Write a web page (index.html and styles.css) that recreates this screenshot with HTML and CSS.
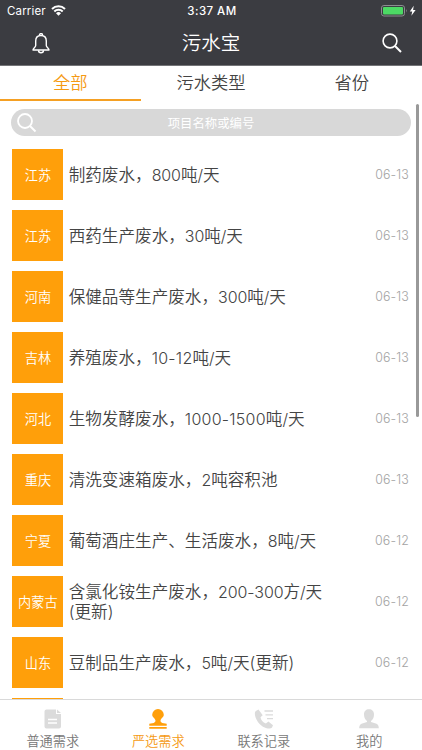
FILE: index.html
```html
<!DOCTYPE html>
<html lang="zh-CN">
<head>
<meta charset="utf-8">
<title>污水宝</title>
<link rel="stylesheet" href="styles.css">
</head>
<body>
<div class="app">
  <header class="header">
    <div class="status">
      <div class="carrier"><span>Carrier</span>
        <svg width="15" height="11" viewBox="0 0 15 11" fill="none" stroke="#fff" stroke-width="2"><path d="M1 4a9.2 9.2 0 0 1 13 0M3.3 6.5a6 6 0 0 1 8.4 0"/><path d="M7.5 10.7 5 8.2a3.6 3.6 0 0 1 5 0z" fill="#fff" stroke="none"/></svg>
      </div>
      <div class="time">3:37 AM</div>
      <div class="power">
        <svg width="36" height="12" viewBox="0 0 36 12"><rect x=".5" y=".5" width="23" height="10.5" rx="2.4" fill="none" stroke="#8c8d90"/><rect x="2" y="2" width="20" height="7.5" rx="1" fill="#4cd964"/><path d="M25 4q1.5 1.8 0 3.6z" fill="#8c8d90"/><path d="M32.7.8 28.8 6.5h2.4l-.8 4.2 4.2-5.8h-2.5z" fill="#fff"/></svg>
      </div>
    </div>
    <div class="navbar">
      <svg class="bell" width="18" height="21" viewBox="0 0 18 21" fill="none" stroke="#fff" stroke-width="1.4" stroke-linejoin="round"><path d="M7.5 2.6V2a1.5 1.5 0 0 1 3 0v.6"/><path d="M9 2.5C5.5 2.5 3.7 5 3.7 8v4.5C3.7 14.5 1 15 1 17h16c0-2-2.7-2.5-2.7-4.5V8c0-3-1.8-5.5-5.3-5.5z"/><path d="M6.5 17.2a2.5 2.5 0 0 0 5 0"/></svg>
      <h1 class="title">污水宝</h1>
      <svg class="find" width="20" height="20" viewBox="0 0 20 20" fill="none" stroke="#fff" stroke-width="1.6"><circle cx="8" cy="8" r="6.9"/><path d="m13 13 6 6" stroke-width="2"/></svg>
    </div>
  </header>
  <nav class="tabs"><a class="tab active">全部</a><a class="tab">污水类型</a><a class="tab">省份</a></nav>
  <main class="content">
    <div class="search">
      <svg width="20" height="20" viewBox="0 0 20 20" fill="none" stroke="#fff" stroke-width="1.8"><circle cx="8" cy="8" r="7"/><path d="m13 13 5.5 5.5" stroke-width="2"/></svg>
      <span>项目名称或编号</span>
    </div>
    <ul class="list">
      <li class="row"><b class="place">江苏</b><p class="name">制药废水，<i>800</i>吨<i>/</i>天</p><time>06-13</time></li>
      <li class="row"><b class="place">江苏</b><p class="name">西药生产废水，<i>30</i>吨<i>/</i>天</p><time>06-13</time></li>
      <li class="row"><b class="place">河南</b><p class="name">保健品等生产废水，<i>300</i>吨<i>/</i>天</p><time>06-13</time></li>
      <li class="row"><b class="place">吉林</b><p class="name">养殖废水，<i class="range">10-12</i>吨<i>/</i>天</p><time>06-13</time></li>
      <li class="row"><b class="place">河北</b><p class="name">生物发酵废水，<i class="range">1000-1500</i>吨<i>/</i>天</p><time>06-13</time></li>
      <li class="row"><b class="place">重庆</b><p class="name">清洗变速箱废水，<i>2</i>吨容积池</p><time>06-13</time></li>
      <li class="row"><b class="place">宁夏</b><p class="name">葡萄酒庄生产、生活废水，<i>8</i>吨<i>/</i>天</p><time>06-12</time></li>
      <li class="row"><b class="place">内蒙古</b><p class="name">含氯化铵生产废水，<i>200-300</i>方<i>/</i>天<br>(更新)</p><time>06-12</time></li>
      <li class="row"><b class="place">山东</b><p class="name">豆制品生产废水，<i>5</i>吨<i>/</i>天(更新)</p><time>06-12</time></li>
      <li class="row"><b class="place"></b></li>
    </ul>
    <div class="scrollbar"></div>
  </main>
  <footer class="tabbar">
    <a class="item"><svg width="18" height="20" viewBox="0 0 18 20"><path d="M2.5.5H12V5h5v12.500a2 2 0 0 1-2 2H2.500a2 2 0 0 1-2-2v-15a2 2 0 0 1 2-2zM13 .5 17 4h-4z" fill="#dbdbdb"/><path d="M4 10.500h9M4 14h9" stroke="#fff" stroke-width="1.3"/></svg><span>普通需求</span></a>
    <a class="item on"><svg width="18" height="20" viewBox="0 0 18 20" fill="#ff9f0a"><path d="M9 0a5.800 5.800 0 0 0-5.800 5.800c0 2.600 3.300 3.600 3.300 6 0 1-.8 1.800-1.800 2.100L.3 14.700v2h17.400v-2l-4.400-.8c-1-.3-1.800-1.100-1.800-2.100 0-2.400 3.300-3.400 3.300-6A5.800 5.800 0 0 0 9 0zM.3 18.100h17.400v1.700H.3z"/></svg><span>严选需求</span></a>
    <a class="item"><svg width="20" height="20" viewBox="0 0 20 20" fill="#dbdbdb"><path d="M4.500.6 1.800 2.100C.5 3 .7 6 1.600 8.600 3.300 13.600 7.600 18 12.600 19.200c2.500.6 4.500.2 5.400-.8l1-2.200-4.600-3.600-2.500 2c-3-1-5-3.600-5.400-6.400l2.200-2z"/><path d="M10.500 2H19M11.500 5.800H19M13 9.600h6" stroke="#dbdbdb" stroke-width="1.300"/></svg><span>联系记录</span></a>
    <a class="item"><svg width="20" height="20" viewBox="0 0 20 20" fill="#dbdbdb"><path d="M10 .3c-3 0-5 2-5 5 0 3.200 1 5.400 3 6.700v1L2.500 14.800C.8 15.500.2 17 .2 19.300h19.600c0-2.300-.6-3.800-2.300-4.500L12 13v-1c2-1.300 3-3.500 3-6.700 0-3-2-5-5-5z"/></svg><span>我的</span></a>
  </footer>
</div>
</body>
</html>
```
FILE: styles.css
```css
* { box-sizing: border-box; margin: 0; padding: 0; }
body { width: 422px; height: 750px; overflow: hidden; background: #fff; font-family: Inter, "Noto Sans CJK SC", sans-serif; font-weight: 350; color: #444; }
svg { display: block; flex: none; }
.app { display: flex; flex-direction: column; width: 422px; height: 750px; }
.header { height: 66px; flex: none; background: #3b3c41; color: #fff; border-bottom: 1px solid #737477; }
.status { display: grid; grid-template-columns: 1fr 100px 1fr; height: 22px; align-items: center; font-size: 11.5px; font-weight: 400; }
.carrier { display: flex; gap: 7px; padding-left: 7px; letter-spacing: .15px; }
.carrier svg { margin: 1px 0 0 -2px; }
.time { text-align: center; font-weight: 500; letter-spacing: .45px; padding-left: 2px; }
.power { display: flex; justify-content: flex-end; padding-right: 5px; }
.navbar { display: flex; align-items: center; justify-content: space-between; height: 42px; padding: 0 20px 0 32px; }
.title { font-size: 19.5px; font-weight: 350; line-height: 28px; }
.bell { margin-right: -10px; }
.tabs { display: flex; height: 35px; flex: none; }
.tab { flex: 1; text-align: center; font-size: 17.3px; line-height: 33px; border-bottom: 2px solid transparent; }
.tab.active { color: #f59a13; border-color: #f5a023; }
.content { position: relative; flex: 1; min-height: 0; overflow: hidden; padding: 8px 11px 0; }
.search { display: flex; align-items: center; height: 27px; border-radius: 14px; background: #d8d8d8; padding-left: 6px; color: #fff; font-size: 12.4px; font-weight: 400; }
.search span { flex: 1; text-align: center; margin-right: 26px; }
.list { list-style: none; padding-top: 13px; }
.row { display: flex; align-items: center; height: 51px; margin: 0 2px 10px 1.4px; }
.place { display: flex; align-items: center; justify-content: center; width: 51px; height: 51px; flex: none; background: #ff9f0a; color: #fff; font-weight: 350; font-size: 13.2px; }
.name { flex: 1; margin-left: 5.3px; font-size: 16.6px; line-height: 20px; white-space: nowrap; }
.name i { font-style: normal; font-size: 16px; letter-spacing: -.1px; }
.name .range { letter-spacing: .25px; }
time { font-size: 12.4px; color: #a3a3a3; letter-spacing: .15px; }
.scrollbar { position: absolute; right: 3px; top: 3px; width: 3px; height: 313px; border-radius: 2px; background: #999; }
.tabbar { display: flex; flex: none; height: 51px; border-top: 1px solid #d9d9d9; background: #fff; }
.item { flex: 1; display: flex; flex-direction: column; align-items: center; padding-top: 9px; font-size: 13.2px; line-height: 18px; color: #777; }
.item span { margin-top: 3px; }
.item.on { color: #f59a13; }
```
